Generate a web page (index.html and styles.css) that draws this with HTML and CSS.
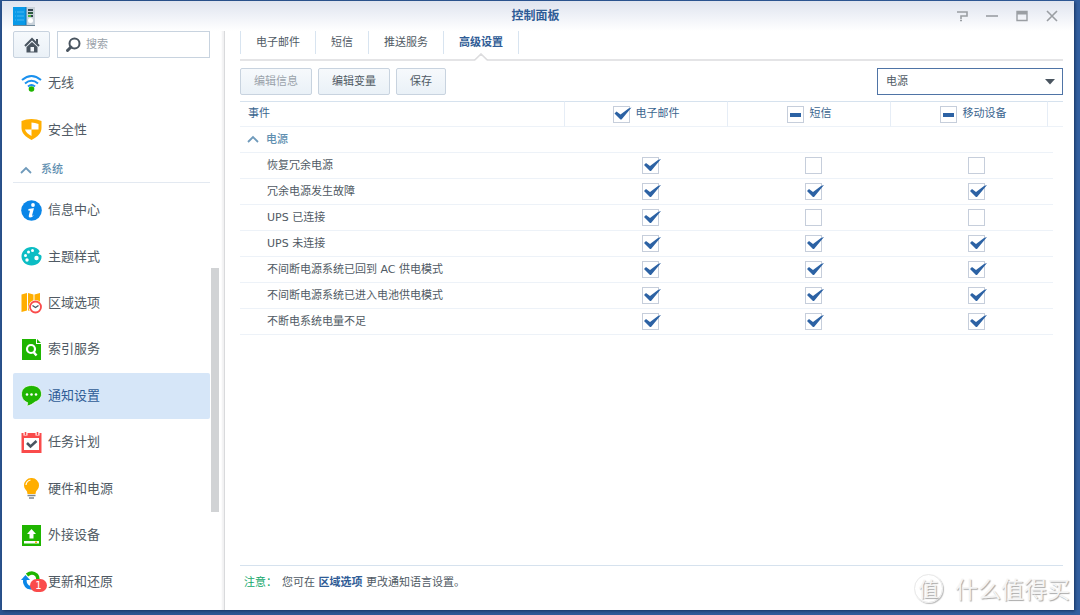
FILE: index.html
```html
<!DOCTYPE html>
<html lang="zh-CN">
<head>
<meta charset="utf-8">
<title>控制面板</title>
<link rel="stylesheet" href="styles.css">
</head>
<body>
<div class="window">
  <header class="titlebar">
    <svg class="app-icon" width="22" height="19" viewBox="0 0 22 19" aria-hidden="true">
      <rect x="12" y="0" width="10" height="18" fill="#c9d2da"/>
      <rect x="0" y="0" width="13" height="18" fill="#0a9ae8"/>
      <rect x="0" y="18" width="22" height="1" fill="#6e8798"/>
      <path d="M2 5h9M2 9h9M2 13h9" stroke="#48b6f1" stroke-dasharray="1 1 7"/>
      <path d="M13 0v18" stroke="#0874b8"/>
      <rect x="15" y="2" width="5" height="2" fill="#31424f"/>
      <rect x="15" y="5" width="5" height="2" fill="#2e5a40"/>
      <rect x="15" y="8" width="3" height="2" fill="#49b83a"/><rect x="18" y="8" width="2" height="2" fill="#31424f"/>
      <circle cx="17.500" cy="13.500" r="2.500" fill="#fff"/>
    </svg>
    <h1 class="title">控制面板</h1>
    <div class="window-tools">
      <button class="tool" type="button" aria-label="帮助"><svg width="12" height="12" viewBox="0 0 12 12"><path d="M1 2h10v4H5v3M4 10.500h2" fill="none" stroke="#9a9ea3" stroke-width="1.600"/></svg></button>
      <button class="tool" type="button" aria-label="最小化"><svg width="12" height="12" viewBox="0 0 12 12"><path d="M0 6h12" stroke="#9a9ea3" stroke-width="1.600"/></svg></button>
      <button class="tool" type="button" aria-label="最大化"><svg width="12" height="12" viewBox="0 0 12 12"><path d="M1 1.500h10v9H1z" fill="none" stroke="#9a9ea3" stroke-width="1.400"/><path d="M1 3h10" stroke="#9a9ea3" stroke-width="3"/></svg></button>
      <button class="tool" type="button" aria-label="关闭"><svg width="12" height="12" viewBox="0 0 12 12"><path d="M1 1l10 10M11 1L1 11" stroke="#9a9ea3" stroke-width="1.600"/></svg></button>
    </div>
  </header>
  <div class="content">
    <aside class="sidebar">
      <div class="search-row">
        <button class="btn home" type="button" aria-label="主页">
          <svg width="16" height="16" viewBox="0 0 16 16"><path d="M1 9l7-7 7 7" fill="none" stroke="#4a5560" stroke-width="2"/><path d="M12 2h2v5l-2-2z" fill="#4a5560"/><path d="M8 5l5.500 5v5.500h-11V10z" fill="#4a5560"/><path d="M6.500 10h3.500v4.500H6.500z" fill="#f3f7fb"/></svg>
        </button>
        <label class="search">
          <svg width="16" height="16" viewBox="0 0 16 16" aria-hidden="true"><circle cx="9.500" cy="6.500" r="5" fill="none" stroke="#4a5560" stroke-width="2"/><path d="M6 10L2.500 13.500" stroke="#4a5560" stroke-width="3" stroke-linecap="round"/></svg>
          <input type="search" placeholder="搜索" aria-label="搜索">
        </label>
      </div>
      <nav class="nav">
        <ul class="nav-list short">
          <li><a class="nav-item" href="#"><svg width="21" height="21" viewBox="0 0 21 21"><g fill="none" stroke="#1a90ee" stroke-width="2"><path d="M1 7q9.500-8 19 0"/><path d="M4 10.500q6.500-5.500 13 0"/><path d="M7 13.500q3.500-3 7 0"/></g><circle cx="10.500" cy="16" r="2.800" fill="#1fb500"/></svg>无线</a></li>
          <li><a class="nav-item" href="#"><svg width="21" height="21" viewBox="0 0 21 21"><path d="M10.500 0Q16 0 20.500 2V9c0 5-4 9-10 12C4.500 18 .5 14 .5 9V2Q5 0 10.500 0z" fill="#ffae00"/><path d="M10.500 3.500Q14 3.500 17.500 5v5.500h-7zM10.500 10.500V17Q5 14 4 10.500z" fill="#fff"/></svg>安全性</a></li>
        </ul>
        <h2 class="nav-group"><svg width="12" height="8" viewBox="0 0 12 8"><path d="M1 7l5-5 5 5" fill="none" stroke="#6f9abb" stroke-width="1.800"/></svg>系统</h2>
        <ul class="nav-list long">
          <li><a class="nav-item" href="#"><svg width="21" height="21" viewBox="0 0 21 21"><circle cx="10.500" cy="10.500" r="10.300" fill="#0a86e8"/><circle cx="12" cy="5" r="1.900" fill="#fff"/><path d="M7.500 9l4.500-.7h1L11 15.500q0 .8 2-.8-1.500 2.800-4 2.800-1.700 0-1.200-2l1.200-4.700-1.800-.3z" fill="#fff"/></svg>信息中心</a></li>
          <li><a class="nav-item" href="#"><svg width="21" height="21" viewBox="0 0 21 21"><path d="M10.500 1c4 0 7 2 8 4 .5 1.500-2 1.500-1 3 .8 1 2.700.5 3 2 .5 5-4 9.500-10 9.500C5 19.500.5 15.500.5 10.500S5 1 10.500 1z" fill="#0bbdc4"/><g fill="#fff"><circle cx="11.500" cy="4.500" r="1.500"/><circle cx="7.500" cy="6" r="1.500"/><circle cx="4.500" cy="9.500" r="1.500"/><circle cx="6" cy="14" r="1.700"/><circle cx="15.500" cy="12" r="2.200"/></g></svg>主题样式</a></li>
          <li><a class="nav-item" href="#"><svg width="21" height="21" viewBox="0 0 21 21"><path d="M.5 1.500L6 0v17.500L.5 19zM7 0l5.500 1.500V19L7 17.500zM13.500 1.500L19 0v17.500L13.500 19z" fill="#ffae00"/><circle cx="14.500" cy="14" r="7" fill="#fff"/><circle cx="14.500" cy="14" r="5.500" fill="#fff" stroke="#fa4b4b" stroke-width="1.800"/><path d="M11.500 12.500l3 2 3-2" fill="none" stroke="#4a5560" stroke-width="1.400"/></svg>区域选项</a></li>
          <li><a class="nav-item" href="#"><svg width="21" height="21" viewBox="0 0 21 21"><path d="M1 0h14v5h5v16H1zM16 0l4 4h-4z" fill="#1fb500"/><circle cx="10" cy="10" r="4" fill="none" stroke="#fff" stroke-width="2.200"/><path d="M12.500 13l3 3.500" stroke="#fff" stroke-width="2.500"/></svg>索引服务</a></li>
          <li><a class="nav-item active" href="#" aria-current="page"><svg width="21" height="21" viewBox="0 0 21 21"><path d="M10.500.5c6 0 10 3.500 10 8.500 0 4-3.500 7-6.500 8-2 1.500-5 4-8.500 4 1-1 1.300-2.500 1-3.500C3 16.500.5 13 .5 9 .5 4 4.500.5 10.500.5z" fill="#1fb500" stroke="#fff" stroke-width=".7"/><g fill="#fff"><circle cx="6" cy="9.500" r="1.300"/><circle cx="10.500" cy="9.500" r="1.300"/><circle cx="15" cy="9.500" r="1.300"/></g></svg>通知设置</a></li>
          <li><a class="nav-item" href="#"><svg width="21" height="21" viewBox="0 0 21 21"><path d="M.5 1h20v20H.5z" fill="#fa4b4b"/><path d="M3 6h15v12H3z" fill="#fff"/><path d="M4.500 0v3.500M16.500 0v3.500" stroke="#fff" stroke-width="4"/><path d="M4.500 0v3M16.500 0v3" stroke="#fa4b4b" stroke-width="1.600"/><path d="M6 11l3.500 3.500L15.500 9" fill="none" stroke="#4a5560" stroke-width="2.500"/></svg>任务计划</a></li>
          <li><a class="nav-item" href="#"><svg width="21" height="21" viewBox="0 0 21 21"><path d="M10.500 0A7.300 7.300 0 0 1 18 7.500c0 3-2 4.500-3 6l-.5 2.500h-8L6 13.500C5 12 3 10.500 3 7.500A7.300 7.300 0 0 1 10.500 0z" fill="#ffae00"/><path d="M5 7q.5-4 4.500-5" fill="none" stroke="#fff" stroke-width="1.200"/><path d="M6.500 17.500h8M8 20h5" stroke="#7d8790" stroke-width="1.300"/></svg>硬件和电源</a></li>
          <li><a class="nav-item" href="#"><svg width="21" height="21" viewBox="0 0 21 21"><path d="M1 0h19v21H1z" fill="#1fb500"/><path d="M10.500 4l4.500 5h-2.500v4.500h-4V9H6z" fill="#fff"/><path d="M3 16h15v2.500H3z" fill="#fff"/><path d="M14 16.500h2v1.500h-2z" fill="#ffae00"/></svg>外接设备</a></li>
          <li><a class="nav-item" href="#"><span class="icon-wrap"><svg width="21" height="21" viewBox="0 0 21 21"><path d="M6 4q5-4 9.500 0Q17 5.500 17 9" fill="none" stroke="#1fb500" stroke-width="3.600"/><path d="M4 8q-1 5 3 8l4 1" fill="none" stroke="#0a86e8" stroke-width="3.600"/><path d="M0 9l4.500-5L9 9z" fill="#0a86e8"/></svg><span class="badge">1</span></span>更新和还原</a></li>
        </ul>
      </nav>
      <div class="scroll-thumb"></div>
    </aside>
    <main class="main">
      <nav class="tabs">
        <a class="tab" href="#">电子邮件</a>
        <a class="tab" href="#">短信</a>
        <a class="tab" href="#">推送服务</a>
        <a class="tab selected" href="#" aria-current="page">高级设置<svg class="notch" width="14" height="8" viewBox="0 0 14 8"><path d="M0 8L7 1l7 7z" fill="#fff"/><path d="M0 7l1-.2L7 1l6 5.800 1 .2" fill="none" stroke="#dcdcde" stroke-width="1.600"/></svg></a>
      </nav>
      <div class="toolbar">
        <button class="btn" type="button" disabled>编辑信息</button>
        <button class="btn" type="button">编辑变量</button>
        <button class="btn" type="button">保存</button>
        <div class="picker">
          <select aria-label="类别"><option>电源</option></select>
          <svg width="10" height="6" viewBox="0 0 10 6" aria-hidden="true"><path d="M0 0h10L5 5.500z" fill="#4a5560"/></svg>
        </div>
      </div>
      <table class="grid">
        <colgroup><col><col class="c-mail"><col class="c-sms"><col class="c-mobile"><col class="c-rest"><col class="c-gutter"></colgroup>
        <thead>
          <tr>
            <th scope="col" class="event">事件</th>
            <th scope="col"><label class="head-check"><input class="check" type="checkbox" checked>电子邮件</label></th>
            <th scope="col"><label class="head-check"><input class="check mixed" type="checkbox" aria-checked="mixed">短信</label></th>
            <th scope="col" class="mobile-head"><label class="head-check"><input class="check mixed" type="checkbox" aria-checked="mixed">移动设备</label></th>
            <td></td><td></td>
          </tr>
        </thead>
        <tbody>
          <tr><th class="group" colspan="5" scope="rowgroup"><svg width="12" height="8" viewBox="0 0 12 8"><path d="M1 7l5-5 5 5" fill="none" stroke="#6f9abb" stroke-width="1.800"/></svg>电源</th></tr>
          <tr><th scope="row">恢复冗余电源</th><td><input class="check" type="checkbox" aria-label="恢复冗余电源 电子邮件" checked></td><td><input class="check" type="checkbox" aria-label="恢复冗余电源 短信"></td><td><input class="check" type="checkbox" aria-label="恢复冗余电源 移动设备"></td><td></td></tr>
          <tr><th scope="row">冗余电源发生故障</th><td><input class="check" type="checkbox" aria-label="冗余电源发生故障 电子邮件" checked></td><td><input class="check" type="checkbox" aria-label="冗余电源发生故障 短信" checked></td><td><input class="check" type="checkbox" aria-label="冗余电源发生故障 移动设备" checked></td><td></td></tr>
          <tr><th scope="row">UPS 已连接</th><td><input class="check" type="checkbox" aria-label="UPS 已连接 电子邮件" checked></td><td><input class="check" type="checkbox" aria-label="UPS 已连接 短信"></td><td><input class="check" type="checkbox" aria-label="UPS 已连接 移动设备"></td><td></td></tr>
          <tr><th scope="row">UPS 未连接</th><td><input class="check" type="checkbox" aria-label="UPS 未连接 电子邮件" checked></td><td><input class="check" type="checkbox" aria-label="UPS 未连接 短信" checked></td><td><input class="check" type="checkbox" aria-label="UPS 未连接 移动设备" checked></td><td></td></tr>
          <tr><th scope="row">不间断电源系统已回到 AC 供电模式</th><td><input class="check" type="checkbox" aria-label="回到 AC 供电模式 电子邮件" checked></td><td><input class="check" type="checkbox" aria-label="回到 AC 供电模式 短信" checked></td><td><input class="check" type="checkbox" aria-label="回到 AC 供电模式 移动设备" checked></td><td></td></tr>
          <tr><th scope="row">不间断电源系统已进入电池供电模式</th><td><input class="check" type="checkbox" aria-label="进入电池供电模式 电子邮件" checked></td><td><input class="check" type="checkbox" aria-label="进入电池供电模式 短信" checked></td><td><input class="check" type="checkbox" aria-label="进入电池供电模式 移动设备" checked></td><td></td></tr>
          <tr><th scope="row">不断电系统电量不足</th><td><input class="check" type="checkbox" aria-label="电量不足 电子邮件" checked></td><td><input class="check" type="checkbox" aria-label="电量不足 短信" checked></td><td><input class="check" type="checkbox" aria-label="电量不足 移动设备" checked></td><td></td></tr>
        </tbody>
      </table>
      <footer class="note"><span class="note-label">注意：</span><span>您可在 <a href="#">区域选项</a> 更改通知语言设置。</span></footer>
    </main>
  </div>
  <div class="watermark"><span class="seal">值</span><span>什么值得买</span></div>
</div>
</body>
</html>
```

FILE: styles.css
```css
* { box-sizing: border-box; }

body {
  margin: 0;
  min-height: 100vh;
  display: flex;
  padding: 1px 6px 5px 2px;
  background: linear-gradient(90deg, #2c5590, #335f9f);
  color: #505a64;
  font: 11px/16px "DejaVu Sans", "Noto Sans CJK SC", sans-serif;
}

button, input, select { font: inherit; color: inherit; }
a { color: inherit; text-decoration: none; }
ul { list-style: none; margin: 0; padding: 0; }
svg { flex: none; }

.window {
  position: relative;
  flex: 1;
  display: flex;
  flex-direction: column;
  background: #fff;
  box-shadow: 1px 1px 3px #16335f;
}

.titlebar {
  height: 30px;
  display: grid;
  grid-template-columns: 1fr auto 1fr;
  align-items: center;
  padding: 0 16px 0 11px;
  background: linear-gradient(#dfe4ef, #fff);
}
.title { margin: 0; font-size: 12px; font-weight: 700; color: #2f5c96; }
.window-tools { display: flex; justify-content: flex-end; gap: 18px; }
.tool { display: flex; padding: 0; border: 0; background: none; }

.content { flex: 1; display: flex; }

.sidebar {
  position: relative;
  width: 223px;
  display: flex;
  flex-direction: column;
  padding: 0 14px 5px 11px;
  border-right: 1px solid #d9dadc;
  box-shadow: inset -3px 0 2px -1px #f1f1f2;
}
.search-row { display: flex; gap: 7px; }
.btn {
  height: 27px;
  padding: 0 13px;
  border: 1px solid #c8d3df;
  border-radius: 2px;
  background: linear-gradient(#f6f9fc, #eaf1f7);
}
.btn:disabled { color: #9aa2aa; }
.home { flex: none; width: 37px; display: flex; align-items: center; justify-content: center; padding: 0; }
.search {
  flex: 1;
  min-width: 0;
  height: 27px;
  display: flex;
  align-items: center;
  gap: 5px;
  padding: 0 7px;
  border: 1px solid #c8d3df;
}
.search input { flex: 1; min-width: 0; padding: 0; border: 0; outline: 0; background: none; }
.search input::placeholder { color: #9aa2aa; }

.nav { flex: 1; display: flex; flex-direction: column; padding-top: 2px; }
.nav-list { display: grid; grid-auto-rows: 1fr; }
.short { flex: 2; }
.long { flex: 9; padding-top: 4px; }
.nav-item {
  height: 100%;
  display: flex;
  align-items: center;
  gap: 6px;
  padding: 0 8px;
  border-radius: 2px;
  font-size: 13px;
}
.active { background: #d6e6f8; color: #2f5c96; }
.nav-group {
  height: 30px;
  display: flex;
  align-items: center;
  gap: 9px;
  margin: 0;
  padding: 6px 7px 0;
  border-bottom: 1px solid #e3e9f1;
  font-size: 11px;
  font-weight: 500;
  color: #5f8fb0;
}
.icon-wrap { position: relative; display: flex; }
.badge {
  position: absolute;
  left: 9px;
  top: 8px;
  width: 17px;
  height: 13px;
  border-radius: 7px;
  background: #fa4b4b;
  color: #fff;
  font-size: 10px;
  line-height: 13px;
  text-align: center;
}
.scroll-thumb {
  position: absolute;
  right: 5px;
  top: 41%;
  width: 8px;
  height: 42%;
  background: #d1d3d5;
}

.main { flex: 1; min-width: 0; display: flex; flex-direction: column; padding: 0 11px 0 15px; }

.tabs { height: 30px; display: flex; align-items: flex-start; border-bottom: 2px solid #e4e4e6; }
.tab {
  position: relative;
  height: 23px;
  padding: 4px 15px 3px;
  border-left: 1px solid #d8e4f0;
}
.selected { border-right: 1px solid #d8e4f0; color: #2f5c96; font-weight: 700; }
.notch { position: absolute; left: calc(50% - 7px); top: 22px; }

.toolbar { display: flex; gap: 6px; padding: 7px 0 6px; }
.picker { position: relative; width: 186px; margin-left: auto; }
.picker select {
  width: 100%;
  height: 27px;
  padding: 0 8px;
  border: 1px solid #4f74a6;
  border-radius: 0;
  appearance: none;
  background: #fff;
}
.picker svg { position: absolute; right: 8px; top: 11px; pointer-events: none; }

.grid { width: 100%; table-layout: fixed; border-collapse: separate; border-spacing: 0; }
.c-mail, .c-sms { width: 163px; }
.c-mobile { width: 157px; }
.c-rest { width: 5px; }
.c-gutter { width: 10px; }
.grid th, .grid td {
  height: 26px;
  padding: 0;
  border-bottom: 1px solid #edf2f8;
  vertical-align: middle;
  text-align: center;
  font-weight: 400;
}
.grid thead th, .grid thead td { border-top: 1px solid #d6e2ee; }
.grid thead th { border-right: 1px solid #e6edf6; color: #3b658f; }
.grid thead .event, .grid tbody th { text-align: left; }
.grid thead .event { padding-left: 8px; }
.grid thead .mobile-head { padding-left: 8px; }
.grid tbody th { padding-left: 27px; }
.grid tbody td { padding-left: 8px; }
.grid tbody td:nth-child(4) { padding-left: 14px; }
.grid tbody td:nth-child(5) { padding: 0; }
.grid tbody .group { padding-left: 7px; color: #5f8fb0; font-weight: 500; }
.group svg { margin-right: 7px; }
.head-check { display: flex; align-items: center; justify-content: center; gap: 6px; }

.check {
  appearance: none;
  position: relative;
  display: inline-block;
  width: 17px;
  height: 17px;
  margin: 0;
  border: 1px solid #c6cedb;
  background: #fff;
  vertical-align: middle;
}
.check:checked::before {
  content: "";
  position: absolute;
  left: 0;
  top: 0;
  width: 18px;
  height: 15px;
  background: #2c62a4;
  clip-path: polygon(1px 7px, 3px 5px, 7px 8px, 15px 2px, 18px 1px, 8px 13px, 7px 13px);
}
.mixed::before {
  content: "";
  position: absolute;
  left: 2px;
  top: 6px;
  width: 11px;
  height: 4px;
  background: #2c62a4;
}

.note {
  display: flex;
  gap: 5px;
  margin-top: auto;
  padding: 9px 4px 19px;
  border-top: 1px solid #d6e2ee;
}
.note-label { color: #12a86b; }
.note a { color: #2f5c96; font-weight: 700; }

.watermark {
  position: absolute;
  right: 4px;
  bottom: 6px;
  display: flex;
  align-items: center;
  gap: 12px;
  color: #f4f4f4;
  font: 23px/32px "Noto Sans CJK SC", sans-serif;
  text-shadow: 1px 1px 1px #a8a8a8;
  pointer-events: none;
}
.seal {
  width: 29px;
  height: 29px;
  border: 1px solid #e8e8e8;
  border-radius: 50%;
  box-shadow: 1px 1px 1px #bcbcbc;
  font-size: 20px;
  line-height: 27px;
  text-align: center;
}
```
